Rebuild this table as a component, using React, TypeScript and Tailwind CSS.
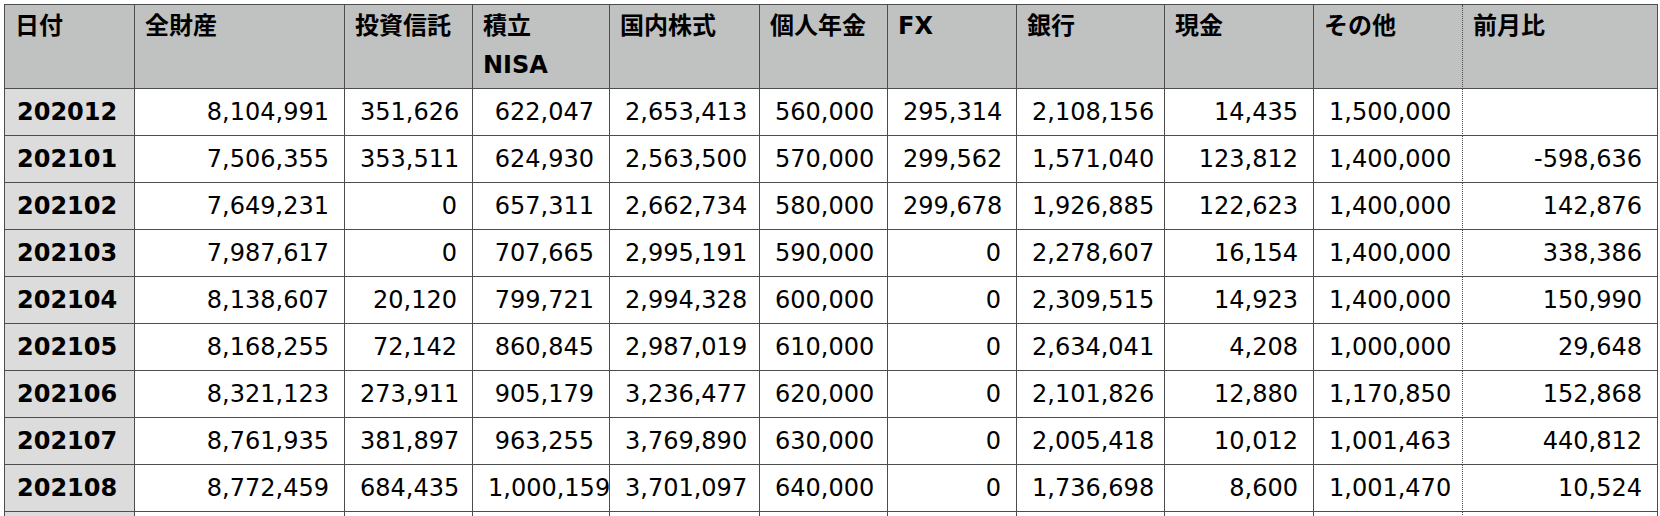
import React from 'react';

const columns = ['日付', '全財産', '投資信託', '積立\nNISA', '国内株式', '個人年金', 'FX', '銀行', '現金', 'その他', '前月比'];

// column widths include the right border of each cell
const colWidths = ['w-[130px]', 'w-[210px]', 'w-[128px]', 'w-[137px]', 'w-[150px]', 'w-[128px]', 'w-[129px]', 'w-[148px]', 'w-[149px]', 'w-[149px]', 'w-[195px]'];

const rows: [string, ...string[]][] = [
  ['202012', '8,104,991', '351,626', '622,047', '2,653,413', '560,000', '295,314', '2,108,156', '14,435', '1,500,000', ''],
  ['202101', '7,506,355', '353,511', '624,930', '2,563,500', '570,000', '299,562', '1,571,040', '123,812', '1,400,000', '-598,636'],
  ['202102', '7,649,231', '0', '657,311', '2,662,734', '580,000', '299,678', '1,926,885', '122,623', '1,400,000', '142,876'],
  ['202103', '7,987,617', '0', '707,665', '2,995,191', '590,000', '0', '2,278,607', '16,154', '1,400,000', '338,386'],
  ['202104', '8,138,607', '20,120', '799,721', '2,994,328', '600,000', '0', '2,309,515', '14,923', '1,400,000', '150,990'],
  ['202105', '8,168,255', '72,142', '860,845', '2,987,019', '610,000', '0', '2,634,041', '4,208', '1,000,000', '29,648'],
  ['202106', '8,321,123', '273,911', '905,179', '3,236,477', '620,000', '0', '2,101,826', '12,880', '1,170,850', '152,868'],
  ['202107', '8,761,935', '381,897', '963,255', '3,769,890', '630,000', '0', '2,005,418', '10,012', '1,001,463', '440,812'],
  ['202108', '8,772,459', '684,435', '1,000,159', '3,701,097', '640,000', '0', '1,736,698', '8,600', '1,001,470', '10,524'],
  ['', '', '', '', '', '', '', '', '', '', ''],
];

function edge(i: number) {
  // the その他 column ends with a dotted rule
  return i === 9 ? 'border-r border-b border-[#4d4d4d] [border-right-style:dotted]' : 'border-r border-b border-[#4d4d4d]';
}

export default function App() {
  return (
    <div className="bg-white min-h-screen p-[4px] text-black font-['DejaVu_Sans','Noto_Sans_CJK_JP',sans-serif] text-[24px]">
      <div className="inline-flex flex-col border-l border-t border-[#4d4d4d]">
        {/* Header */}
        <div className="flex">
          {columns.map((c, i) => (
            <div
              key={c}
              className={`${colWidths[i]} h-[84px] shrink-0 bg-[#c0c2c1] ${edge(i)} pl-[10px] pt-[2px] font-bold leading-[39px] whitespace-pre-line`}
            >
              {c}
            </div>
          ))}
        </div>

        {/* Rows */}
        {rows.map((r, ri) => (
          <div key={ri} className="flex">
            {r.map((v, i) =>
              i === 0 ? (
                <div
                  key={i}
                  className={`${colWidths[i]} h-[47px] shrink-0 bg-[#dcdcdc] ${edge(i)} pl-[12px] flex items-center font-bold`}
                >
                  {v}
                </div>
              ) : (
                <div
                  key={i}
                  className={`${colWidths[i]} h-[47px] shrink-0 ${edge(i)} px-[15px] flex items-center`}
                >
                  <span className="w-full text-right whitespace-nowrap">{v}</span>
                </div>
              )
            )}
          </div>
        ))}
      </div>
    </div>
  );
}
